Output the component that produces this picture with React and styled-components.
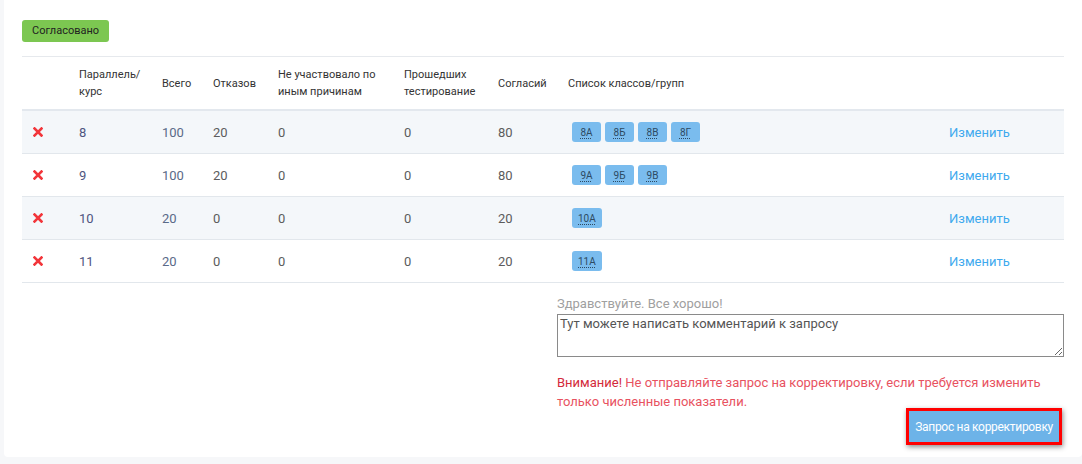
import React from 'react';
import styled, { createGlobalStyle } from 'styled-components';

const GlobalStyle = createGlobalStyle`
  body {
    margin: 0;
    background: #f6f7f9;
    font-family: Roboto, "Noto Sans", Arial, sans-serif;
  }
`;

const Card = styled.div`
  margin: 0 0 7px 4px;
  background: #fff;
  border-radius: 0 0 4px 4px;
  padding: 19px 18px 12px 18px;
  min-height: 457px;
  box-sizing: border-box;
`;

const StatusBadge = styled.span`
  display: inline-block;
  background: #7cc751;
  color: #222;
  font-size: 11px;
  line-height: 22px;
  height: 22px;
  padding: 0 10px;
  border-radius: 3px;
`;

const Divider = styled.div`
  height: 1px;
  background: #e6e9ed;
  margin-top: 14px;
`;

const Table = styled.table`
  width: 100%;
  border-collapse: collapse;
  table-layout: fixed;
`;

const HeadCell = styled.th`
  text-align: left;
  font-weight: 400;
  font-size: 11px;
  line-height: 17px;
  color: #333;
  padding: 0 8px;
  height: 52px;
  border-bottom: 2px solid #e3e8ee;
  vertical-align: middle;
`;

const Row = styled.tr`
  background: ${(p) => (p.$striped ? '#f4f7fa' : '#fff')};
  border-bottom: 1px solid #e2e7ec;
`;

const Cell = styled.td`
  font-size: 13px;
  color: ${(p) => p.$color || '#5c5c5c'};
  padding: 0 8px;
  height: 42px;
  vertical-align: middle;
`;

const RemoveIcon = styled.span`
  display: inline-block;
  margin-left: 3px;
  line-height: 0;
`;

const Tags = styled.div`
  display: flex;
  gap: 4px;
  padding-left: 4px;
`;

const Tag = styled.span`
  display: inline-flex;
  align-items: center;
  justify-content: center;
  background: #7abcee;
  border-radius: 3px;
  height: 20px;
  min-width: 29px;
  padding: 0 6px;
  box-sizing: border-box;
  font-size: 10px;
  color: #2d4a63;
  text-decoration: underline dotted;
  text-underline-offset: 2px;
`;

const EditLink = styled.a`
  color: #3ea9ee;
  font-size: 13px;
  text-decoration: none;
`;

const Bottom = styled.div`
  display: flex;
  justify-content: flex-end;
  margin-top: 13px;
`;

const CommentBlock = styled.div`
  width: 507px;
  display: flex;
  flex-direction: column;
`;

const CommentLabel = styled.label`
  font-size: 13px;
  color: #a0a0a0;
  line-height: 16px;
`;

const CommentInput = styled.textarea`
  margin-top: 2px;
  height: 43px;
  box-sizing: border-box;
  border: 1px solid #8a8a8a;
  border-radius: 0;
  font-family: Roboto, "Noto Sans", Arial, sans-serif;
  font-size: 13px;
  color: #555;
  padding: 1px 2px;
  resize: vertical;
  &::placeholder {
    color: #555;
  }
`;

const Warning = styled.p`
  margin: 16px 0 0;
  font-size: 13px;
  line-height: 19px;
  color: #e8525f;
  width: 500px;
  & b {
    font-weight: 400;
    color: #d32a3a;
  }
`;

const ButtonRow = styled.div`
  display: flex;
  justify-content: flex-end;
  margin-top: -3px;
  padding-right: 2px;
`;

const RequestButton = styled.button`
  background: #6db3e8;
  color: #fff;
  font-family: Roboto, "Noto Sans", Arial, sans-serif;
  font-size: 12px;
  letter-spacing: -0.3px;
  height: 37px;
  padding: 0 6px;
  border: 3px solid #f00;
  border-radius: 0;
  box-shadow: 1px 2px 5px rgba(0, 0, 0, 0.45);
  cursor: pointer;
`;

const rows = [
  { par: '8', total: '100', refused: '20', other: '0', passed: '0', agreed: '80', groups: ['8А', '8Б', '8В', '8Г'] },
  { par: '9', total: '100', refused: '20', other: '0', passed: '0', agreed: '80', groups: ['9А', '9Б', '9В'] },
  { par: '10', total: '20', refused: '0', other: '0', passed: '0', agreed: '20', groups: ['10А'] },
  { par: '11', total: '20', refused: '0', other: '0', passed: '0', agreed: '20', groups: ['11А'] },
];

const Cross = () => (
  <svg width="10" height="10" viewBox="0 0 10 10">
    <path d="M1.5 1.5 L8.5 8.5 M8.5 1.5 L1.5 8.5" stroke="#f2353a" strokeWidth="2.6" strokeLinecap="square" />
  </svg>
);

export default function App() {
  return (
    <>
      <GlobalStyle />
      <Card>
        <StatusBadge>Согласовано</StatusBadge>
        <Divider />
        <Table>
          <colgroup>
            <col style={{ width: 49 }} />
            <col style={{ width: 83 }} />
            <col style={{ width: 51 }} />
            <col style={{ width: 65 }} />
            <col style={{ width: 126 }} />
            <col style={{ width: 94 }} />
            <col style={{ width: 70 }} />
            <col style={{ width: 381 }} />
            <col />
          </colgroup>
          <thead>
            <tr>
              <HeadCell />
              <HeadCell>Параллель/<br />курс</HeadCell>
              <HeadCell>Всего</HeadCell>
              <HeadCell>Отказов</HeadCell>
              <HeadCell>Не участвовало по<br />иным причинам</HeadCell>
              <HeadCell>Прошедших<br />тестирование</HeadCell>
              <HeadCell>Согласий</HeadCell>
              <HeadCell>Список классов/групп</HeadCell>
              <HeadCell />
            </tr>
          </thead>
          <tbody>
            {rows.map((r, i) => (
              <Row key={r.par} $striped={i % 2 === 0}>
                <Cell>
                  <RemoveIcon><Cross /></RemoveIcon>
                </Cell>
                <Cell $color="#4f5580">{r.par}</Cell>
                <Cell $color="#5a6a88">{r.total}</Cell>
                <Cell>{r.refused}</Cell>
                <Cell>{r.other}</Cell>
                <Cell>{r.passed}</Cell>
                <Cell>{r.agreed}</Cell>
                <Cell>
                  <Tags>
                    {r.groups.map((g) => (
                      <Tag key={g}>{g}</Tag>
                    ))}
                  </Tags>
                </Cell>
                <Cell>
                  <EditLink href="#">Изменить</EditLink>
                </Cell>
              </Row>
            ))}
          </tbody>
        </Table>
        <Bottom>
          <CommentBlock>
            <CommentLabel>Здравствуйте. Все хорошо!</CommentLabel>
            <CommentInput placeholder="Тут можете написать комментарий к запросу" />
            <Warning>
              <b>Внимание!</b> Не отправляйте запрос на корректировку, если требуется изменить только численные показатели.
            </Warning>
            <ButtonRow>
              <RequestButton>Запрос на корректировку</RequestButton>
            </ButtonRow>
          </CommentBlock>
        </Bottom>
      </Card>
    </>
  );
}
